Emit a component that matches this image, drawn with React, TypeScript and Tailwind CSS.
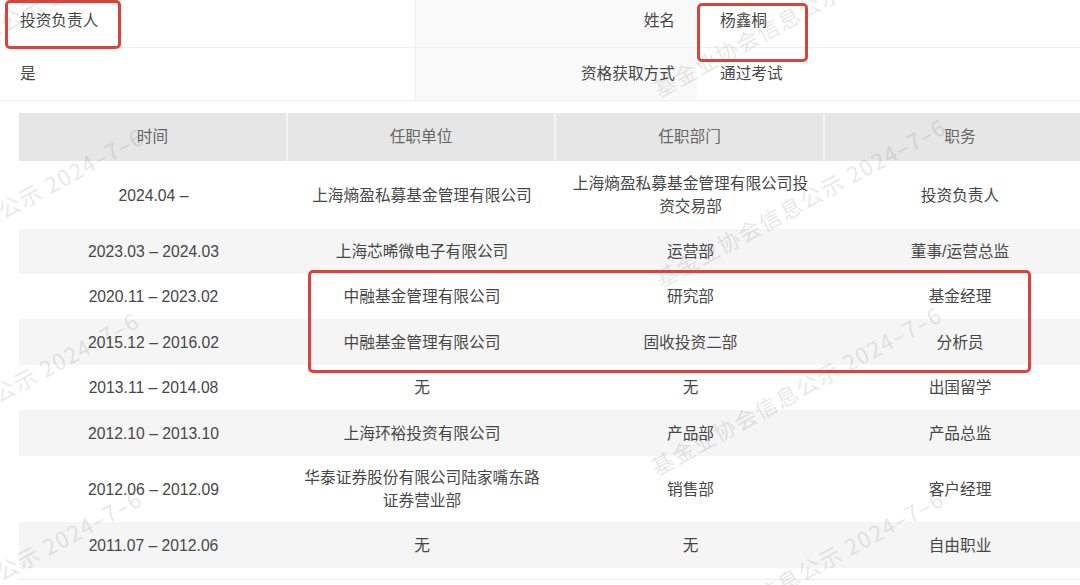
import React from "react";

const rows: { t: string; u: string[]; d: string[]; p: string; h: string; bg: string }[] = [
  { t: "2024.04 –", u: ["上海熵盈私募基金管理有限公司"], d: ["上海熵盈私募基金管理有限公司投", "资交易部"], p: "投资负责人", h: "h-[68px]", bg: "bg-white" },
  { t: "2023.03 – 2024.03", u: ["上海芯晞微电子有限公司"], d: ["运营部"], p: "董事/运营总监", h: "h-[45px]", bg: "bg-[#f5f5f5]" },
  { t: "2020.11 – 2023.02", u: ["中融基金管理有限公司"], d: ["研究部"], p: "基金经理", h: "h-[45px]", bg: "bg-white" },
  { t: "2015.12 – 2016.02", u: ["中融基金管理有限公司"], d: ["固收投资二部"], p: "分析员", h: "h-[46px]", bg: "bg-[#f5f5f5]" },
  { t: "2013.11 – 2014.08", u: ["无"], d: ["无"], p: "出国留学", h: "h-[45px]", bg: "bg-white" },
  { t: "2012.10 – 2013.10", u: ["上海环裕投资有限公司"], d: ["产品部"], p: "产品总监", h: "h-[46px]", bg: "bg-[#f5f5f5]" },
  { t: "2012.06 – 2012.09", u: ["华泰证券股份有限公司陆家嘴东路", "证券营业部"], d: ["销售部"], p: "客户经理", h: "h-[66px]", bg: "bg-white" },
  { t: "2011.07 – 2012.06", u: ["无"], d: ["无"], p: "自由职业", h: "h-[46px]", bg: "bg-[#f5f5f5]" },
];

const wm: [number, number][] = [
  [660, 100],
  [662, 290],
  [658, 478],
  [660, 662],
  [-138, 113],
  [-140, 300],
  [-145, 484],
  [-142, 662],
];

function Cell({ lines }: { lines: string[] }) {
  return (
    <div className="flex flex-col items-center justify-center text-center leading-[23px]">
      {lines.map((l, i) => (
        <span key={i}>{l}</span>
      ))}
    </div>
  );
}

export default function App() {
  return (
    <div
      className="relative w-[1080px] h-[585px] overflow-hidden bg-white text-[15.7px] text-[#474747]"
      style={{ fontFamily: '"Liberation Sans", "Noto Sans CJK SC", sans-serif' }}
    >
      {/* top info */}
      <div className="border-b border-[#ededed]">
        <div className="flex h-[48px] border-b border-[#f0f0f0]">
          <div className="w-[416px] pl-[20px] pt-[9px] border-r border-[#f0f0f0]">投资负责人</div>
          <div className="w-[281px] bg-[#f9f9f9] flex justify-end pr-[22px] pt-[9px]">姓名</div>
          <div className="flex-1 pl-[23px] pt-[9px]">杨鑫桐</div>
        </div>
        <div className="flex h-[52px]">
          <div className="w-[416px] pl-[20px] flex items-center border-r border-[#f0f0f0]">是</div>
          <div className="w-[281px] bg-[#f9f9f9] flex items-center justify-end pr-[22px]">资格获取方式</div>
          <div className="flex-1 pl-[23px] flex items-center">通过考试</div>
        </div>
      </div>

      {/* table */}
      <div className="mt-[12px] ml-[19px] w-[1076px]">
        <div className="grid grid-cols-[269px_268px_269px_270px] h-[48px] bg-[#e6e6e6] text-[#666]">
          <div className="flex items-center justify-center border-r-2 border-[#f4f4f4]">时间</div>
          <div className="flex items-center justify-center border-r-2 border-[#f4f4f4]">任职单位</div>
          <div className="flex items-center justify-center border-r-2 border-[#f4f4f4]">任职部门</div>
          <div className="flex items-center justify-center">职务</div>
        </div>
        {rows.map((r, i) => (
          <div key={i} className={`grid grid-cols-[269px_268px_269px_270px] ${r.h} ${r.bg}`}>
            <Cell lines={[r.t]} />
            <Cell lines={r.u} />
            <Cell lines={r.d} />
            <Cell lines={[r.p]} />
          </div>
        ))}
        <div className="h-[12px] border-b border-[#eeeeee]" />
      </div>

      {/* watermarks */}
      {wm.map(([x, y], i) => (
        <span
          key={i}
          className="absolute whitespace-nowrap text-[22px] tracking-[1.5px] leading-[24px] text-[#000] opacity-[0.085] pointer-events-none origin-bottom-left"
          style={{ left: x, top: y - 24, transform: "rotate(-28.5deg)", fontFamily: '"Noto Sans CJK SC", sans-serif' }}
        >
          基金业协会信息公示 2024–7–6
        </span>
      ))}

      {/* red highlight boxes */}
      <div className="absolute left-[5px] top-[0px] w-[116px] h-[49px] border-[3px] border-[#d8443b] rounded-[5px]" />
      <div className="absolute left-[697px] top-[3px] w-[111px] h-[59px] border-[3px] border-[#d8443b] rounded-[5px]" />
      <div className="absolute left-[308px] top-[270px] w-[723px] h-[103px] border-[3px] border-[#d8443b] rounded-[5px]" />
    </div>
  );
}
